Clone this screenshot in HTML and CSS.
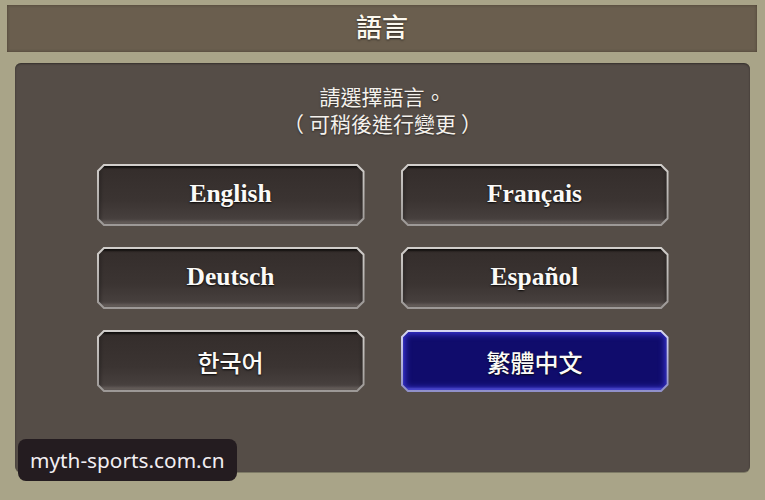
FILE: index.html
```html
<!DOCTYPE html>
<html lang="zh-Hant">
<head>
<meta charset="utf-8">
<link rel="stylesheet" href="styles.css">
</head>
<body>
<div class="frame">
  <div class="header"><span class="title">語言</span></div>
  <div class="panel">
    <div class="prompt">
      <div>請選擇語言。</div>
      <div><span class="paren-l">（</span>可稍後進行變更<span class="paren-r">）</span></div>
    </div>
    <div class="grid">
      <div class="btn"><div class="btn-in latin">English</div></div>
      <div class="btn"><div class="btn-in latin">Français</div></div>
      <div class="btn"><div class="btn-in latin">Deutsch</div></div>
      <div class="btn"><div class="btn-in latin">Español</div></div>
      <div class="btn"><div class="btn-in cjk">한국어</div></div>
      <div class="btn sel"><div class="btn-in cjk">繁體中文</div></div>
    </div>
  </div>
</div>
<div class="watermark">myth-sports.com.cn</div>
</body>
</html>
```
FILE: styles.css
```css
html, body {
  margin: 0;
  padding: 0;
}
body {
  width: 765px;
  height: 500px;
  background: #a9a488;
  overflow: hidden;
  font-family: "Noto Sans CJK TC", "Noto Sans", sans-serif;
  position: relative;
}
.frame {
  display: flex;
  flex-direction: column;
  height: 500px;
  padding: 5px 8px 0 7px;
  box-sizing: border-box;
}
.header {
  height: 47px;
  background: #6a5e4e;
  display: flex;
  align-items: center;
  justify-content: center;
  box-shadow: inset 0 0 3px rgba(40,30,20,0.5);
}
.title {
  color: #fbf8ef;
  font-size: 26px;
  line-height: 1;
  font-weight: 500;
  margin-bottom: 5px;
  text-shadow: 0 1px 2px rgba(0,0,0,0.6);
}
.panel {
  margin: 11px 7px 0 8px;
  height: 409px;
  background: #554d47;
  border-radius: 6px;
  box-shadow: inset 0 1px 2px rgba(0,0,0,0.4), 0 1px 0 rgba(0,0,0,0.25);
  display: flex;
  flex-direction: column;
  align-items: center;
}
.prompt {
  margin-top: 20px;
  color: #f4f1ec;
  font-size: 21px;
  line-height: 27px;
  text-align: center;
  white-space: nowrap;
  text-shadow: 0 1px 2px rgba(0,0,0,0.5);
}
.paren-l {
  padding-right: 5px;
}
.paren-r {
  padding-left: 5px;
}
.grid {
  margin-top: 27px;
  display: grid;
  grid-template-columns: 268px 268px;
  grid-auto-rows: 62px;
  column-gap: 36px;
  row-gap: 21px;
}
.btn {
  background: linear-gradient(#d2cfcc, #9c9896);
  padding: 2px;
  clip-path: polygon(7px 0, calc(100% - 7px) 0, 100% 7px, 100% calc(100% - 7px), calc(100% - 7px) 100%, 7px 100%, 0 calc(100% - 7px), 0 7px);
}
.btn-in {
  height: 100%;
  box-sizing: border-box;
  background: linear-gradient(#342d2b, #3b3432 60%, #4a4341);
  box-shadow: inset 0 -3px 3px rgba(170,160,155,0.35), inset 0 2px 2px rgba(0,0,0,0.6), inset 2px 0 3px rgba(0,0,0,0.3), inset -2px 0 3px rgba(0,0,0,0.3);
  clip-path: polygon(6px 0, calc(100% - 6px) 0, 100% 6px, 100% calc(100% - 6px), calc(100% - 6px) 100%, 6px 100%, 0 calc(100% - 6px), 0 6px);
  display: flex;
  align-items: center;
  justify-content: center;
  color: #fbfaf7;
  text-shadow: 0 1px 2px rgba(0,0,0,0.9);
}
.latin {
  font-family: "Liberation Serif", serif;
  font-weight: bold;
  font-size: 25.5px;
  padding-bottom: 2px;
}
.cjk {
  font-family: "Noto Sans CJK KR", "Noto Sans CJK TC", sans-serif;
  font-size: 24px;
  font-weight: 500;
}
.sel {
  background: linear-gradient(#d6d6f2, #8f8fc8);
}
.sel .btn-in {
  background: #100c6c;
  box-shadow: inset 0 0 6px 2px #3a36d6, inset 0 -2px 2px rgba(180,180,255,0.5);
}
.watermark {
  position: absolute;
  left: 18px;
  top: 439px;
  width: 219px;
  height: 42px;
  box-sizing: border-box;
  padding-left: 12px;
  background: #241c20;
  border-radius: 8px;
  color: #f2eef2;
  font-family: "Noto Sans", sans-serif;
  font-size: 20.8px;
  line-height: 42px;
}
```
